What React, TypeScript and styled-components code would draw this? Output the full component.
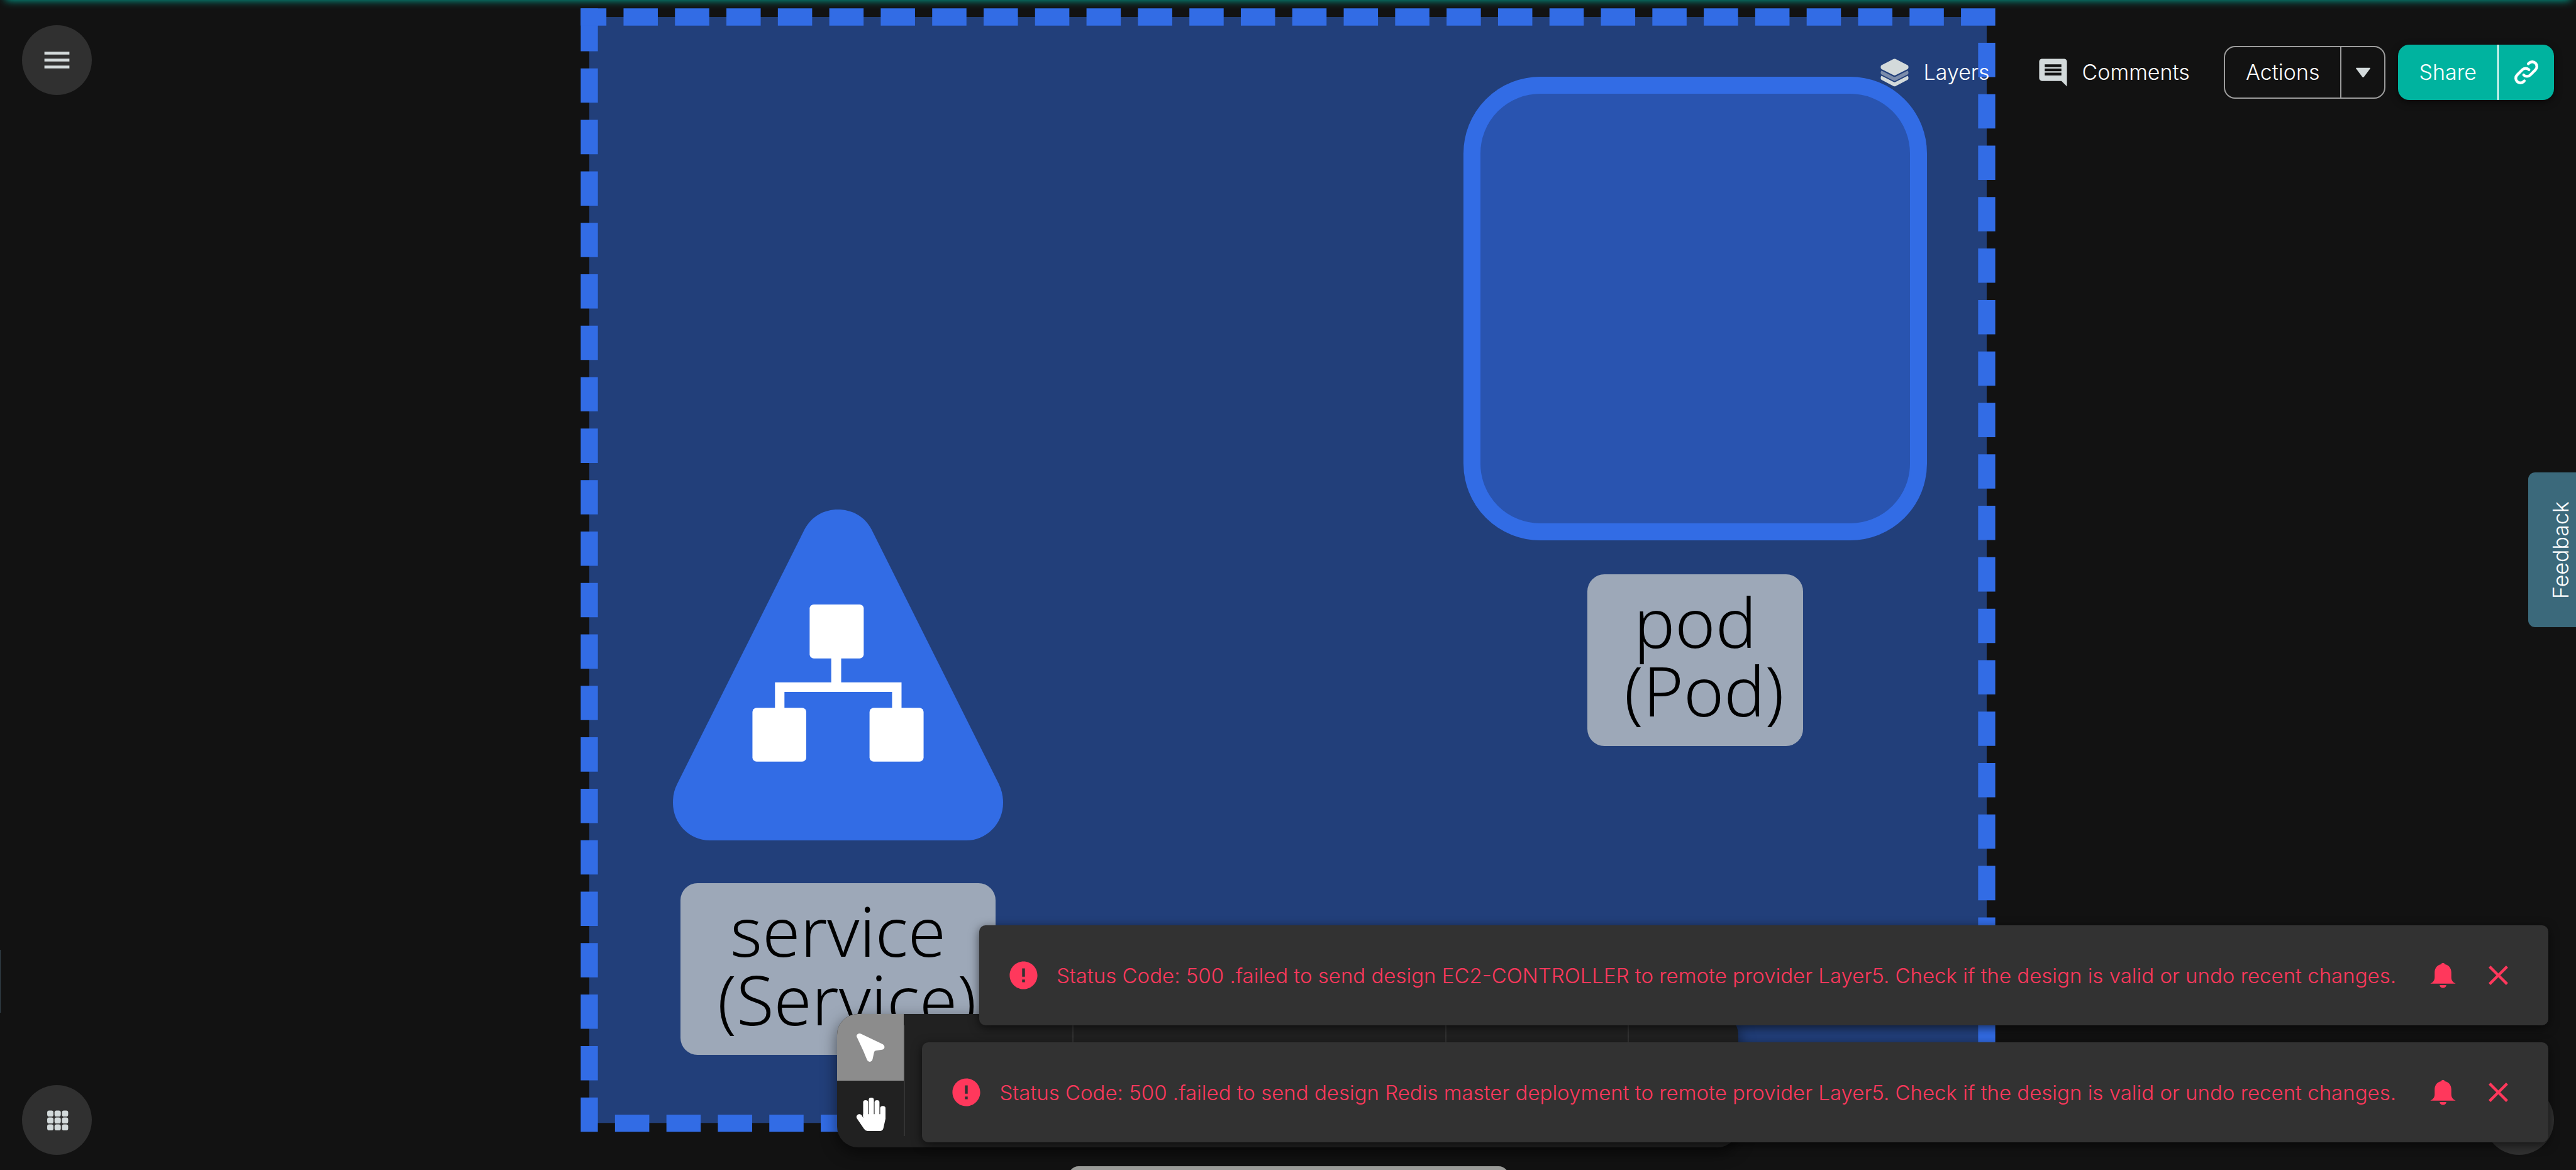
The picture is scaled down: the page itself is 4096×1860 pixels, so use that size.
import React from "react";
import styled, { createGlobalStyle } from "styled-components";

const color = {
  page: "#121212",
  panel: "#323232",
  round: "#303030",
  toolbar: "#212121",
  blue: "#326ce5",
  namespace: "#223f7a",
  pod: "#2954b0",
  label: "#9da8b8",
  teal: "#00b39f",
  icon: "#d3dadb",
  danger: "#ff385c",
};

const GlobalStyle = createGlobalStyle`
  *, *::before, *::after { box-sizing: border-box; }
  body {
    margin: 0;
    background: ${color.page};
    color: #fff;
    font-family: Inter, "Liberation Sans", sans-serif;
    font-size: 34px;
    font-weight: 300;
    line-height: 48px;
  }
  button {
    margin: 0;
    padding: 0;
    border: 0;
    background: none;
    color: inherit;
    font: inherit;
    cursor: pointer;
  }
  svg { display: block; }
`;

const Screen = styled.div`
  position: relative;
  display: flex;
  flex-direction: column;
  justify-content: space-between;
  height: 100vh;
  overflow: hidden;
`;

const TopGlow = styled.div`
  position: absolute;
  left: 9px;
  right: 9px;
  bottom: 100%;
  height: 40px;
  box-shadow: 0 0 14px ${color.teal};
`;

/* ---------- design canvas ---------- */

const Canvas = styled.main`
  position: absolute;
  inset: 0;
  overflow: hidden;
`;

const Namespace = styled.svg`
  position: absolute;
  left: 923px;
  top: 13px;
  width: 2250px;
  height: 1787px;
`;

const Node = styled.figure<{ $x: number; $y: number; $width: number }>`
  position: absolute;
  left: ${(p) => p.$x}px;
  top: ${(p) => p.$y}px;
  width: ${(p) => p.$width}px;
  margin: 0;
  display: flex;
  flex-direction: column;
  align-items: center;
  gap: 54px;
`;

const PodShape = styled.div`
  width: 100%;
  aspect-ratio: 1;
  border: 27px solid ${color.blue};
  border-radius: 122px;
  background: ${color.pod};
`;

const ServiceShape = styled.svg`
  width: 100%;
  height: 540px;
  padding-bottom: 14px;
`;

const NodeLabel = styled.figcaption`
  padding: 20px 30px 35px;
  border-radius: 27px;
  background: ${color.label};
  color: #000;
  font-family: "Noto Sans", sans-serif;
  font-size: 109px;
  font-weight: 350;
  line-height: 109px;
  text-align: center;
  white-space: pre;
`;

/* ---------- header ---------- */

const Header = styled.header`
  position: relative;
  display: flex;
  justify-content: space-between;
  align-items: flex-start;
  padding: 40px 35px 0;
`;

const RoundButton = styled.button`
  display: grid;
  place-items: center;
  width: 111px;
  height: 111px;
  border-radius: 50%;
  background: ${color.round};
  color: ${color.icon};
`;

const HeaderActions = styled.div`
  display: flex;
  align-items: center;
  gap: 20px;
  padding-top: 31px;
`;

const HeaderLinks = styled.nav`
  display: flex;
  gap: 74px;
  margin-right: 34px;
`;

const TextButton = styled.button`
  display: flex;
  align-items: center;
  gap: 20px;
`;

const Icon = styled.svg`
  flex: none;
  width: 53px;
  height: 53px;
  fill: currentColor;
`;

const LightIcon = styled(Icon)`
  color: ${color.icon};
`;

const LinkIcon = styled(Icon)`
  width: 50px;
  height: 50px;
  fill: none;
  stroke: currentColor;
  stroke-width: 2.1;
  stroke-linecap: round;
  stroke-linejoin: round;
`;

const SplitButton = styled.div<{ $solid?: boolean }>`
  display: flex;
  height: ${(p) => (p.$solid ? 88 : 84)}px;
  border: ${(p) => (p.$solid ? "0" : "2px solid #9c9c9c")};
  border-radius: 18px;
  overflow: hidden;
  background: ${(p) => (p.$solid ? color.teal : "transparent")};
  box-shadow: ${(p) => (p.$solid ? "0 4px 12px rgba(0, 0, 0, 0.5)" : "none")};

  button {
    display: grid;
    place-items: center;
    padding: 0 33px;
  }

  button + button {
    width: ${(p) => (p.$solid ? 90 : 70)}px;
    padding: 0;
    border-left: 2px solid ${(p) => (p.$solid ? "#fff" : "#9c9c9c")};
  }
`;

const FeedbackTab = styled.button`
  position: absolute;
  right: 0;
  top: 751px;
  display: grid;
  place-items: center;
  width: 76px;
  height: 246px;
  padding-left: 28px;
  border-radius: 11px 0 0 11px;
  background: #3b697b;
`;

const FeedbackText = styled.span`
  writing-mode: vertical-rl;
  transform: rotate(180deg);
`;

/* ---------- bottom area ---------- */

const Footer = styled.footer`
  position: relative;
  display: flex;
  justify-content: space-between;
  padding: 0 35px 24px;
`;

const Toolbar = styled.div`
  position: absolute;
  left: 1331px;
  bottom: 36px;
  display: flex;
  align-items: center;
  width: 1433px;
  height: 212px;
  border-radius: 33px;
  overflow: hidden;
  background: ${color.toolbar};
  box-shadow: 0 8px 24px rgba(0, 0, 0, 0.55);
`;

const ToolStack = styled.div`
  display: flex;
  flex-direction: column;
`;

const Tool = styled.button<{ $active?: boolean }>`
  display: grid;
  place-items: center;
  width: 106px;
  height: 106px;
  background: ${(p) => (p.$active ? "#8c8c8c" : "transparent")};
`;

const ToolSection = styled.div<{ $width: number }>`
  width: ${(p) => p.$width}px;
  height: 176px;
  border-left: 2px solid #333;
`;

const CursorIcon = styled.svg`
  width: 45px;
  height: 45px;
  fill: #fff;
`;

const HandIcon = styled.svg`
  width: 47px;
  height: 53px;
  fill: #fff;
`;

const Drawer = styled.div`
  position: absolute;
  left: 1699px;
  top: calc(100% - 6px);
  width: 700px;
  height: 40px;
  border-radius: 16px;
  background: #9a9b98;
`;

const SideHandle = styled.div`
  position: absolute;
  left: 0;
  bottom: 250px;
  width: 1px;
  height: 100px;
  background: #33414a;
`;

const Toasts = styled.section`
  position: absolute;
  right: 44px;
  bottom: 44px;
  display: flex;
  flex-direction: column;
  align-items: flex-end;
  gap: 27px;
`;

const Toast = styled.div`
  display: flex;
  align-items: center;
  height: 159px;
  padding: 0 53px 0 44px;
  border-radius: 10px;
  background: ${color.panel};
  color: ${color.danger};
  font-size: 33px;
  white-space: nowrap;
  box-shadow: 0 4px 16px rgba(0, 0, 0, 0.6);
`;

const ToastText = styled.p`
  margin: 0 48px 0 26px;
`;

const ToastActions = styled.div`
  display: flex;
  gap: 35px;
`;

const errorPath =
  "M12 2C6.48 2 2 6.48 2 12s4.48 10 10 10 10-4.48 10-10S17.52 2 12 2zm1 15h-2v-2h2v2zm0-4h-2V7h2v6z";
const closePath =
  "M19 6.41 17.59 5 12 10.59 6.41 5 5 6.41 10.59 12 5 17.59 6.41 19 12 13.41 17.59 19 19 17.59 13.41 12z";
const bellPath =
  "M12 3c-.8 0-1.3.5-1.3 1.1C7.8 4.6 6 6.9 6 10v3.5c0 2-1 3.5-3 4.4v.1h18v-.1c-2-.9-3-2.4-3-4.4V10c0-3.1-1.8-5.4-4.7-5.9 0-.6-.5-1.1-1.3-1.1zM9.6 19h4.8a2.4 2.1 0 0 1-4.8 0z";
const commentPath =
  "M21.99 4c0-1.1-.89-2-1.99-2H4c-1.1 0-2 .9-2 2v12c0 1.1.9 2 2 2h14l4 4-.01-18zM18 14H6v-2h12v2zm0-3H6V9h12v2zm0-3H6V6h12v2z";

const failures = ["EC2-CONTROLLER", "Redis master deployment"];

function ErrorToast({ design }: { design: string }) {
  return (
    <Toast role="alert">
      <Icon viewBox="0 0 24 24" aria-hidden="true">
        <path d={errorPath} />
      </Icon>
      <ToastText>
        Status Code: 500 .failed to send design {design} to remote provider Layer5. Check if the
        design is valid or undo recent changes.
      </ToastText>
      <ToastActions>
        <button type="button" aria-label="Notifications">
          <Icon viewBox="0 0 24 24">
            <path d={bellPath} />
          </Icon>
        </button>
        <button type="button" aria-label="Dismiss">
          <Icon viewBox="0 0 24 24">
            <path d={closePath} />
          </Icon>
        </button>
      </ToastActions>
    </Toast>
  );
}

function DesignCanvas() {
  return (
    <Canvas>
      <Namespace viewBox="1252 18 3052 2424" aria-hidden="true">
        <rect x="1271" y="37" width="3014" height="2385" fill={color.namespace} />
        <path
          d="M1271 37V2422.5H4285V37Z"
          fill="none"
          stroke={color.blue}
          strokeWidth="37"
          strokeDasharray="73.97 36.98"
        />
        <path d="M1252.5 18.5h37v37h-37z" fill={color.blue} />
      </Namespace>
      <Node $x={2327} $y={122} $width={737}>
        <PodShape />
        <NodeLabel>{"pod\n (Pod)"}</NodeLabel>
      </Node>
      <Node $x={1070} $y={810} $width={525}>
        <ServiceShape viewBox="98 96 1362 1398" preserveAspectRatio="none" aria-hidden="true">
          <path
            fill={color.blue}
            d="M640 182C670 122 725 96 778 96C833 96 888 122 918 182L1442 1255C1455 1283 1460 1310 1460 1335C1460 1425 1390 1494 1308 1494H250C165 1494 98 1422 98 1335C98 1305 103 1282 115 1257Z"
          />
          <g fill="#fff">
            <rect x="662" y="497" width="223" height="228" rx="17" />
            <rect x="426" y="934" width="222" height="227" rx="17" />
            <rect x="909" y="934" width="223" height="227" rx="17" />
            <path d="M751 720h41v106h249v112h-39v-71H558v71h-39V826h232z" />
          </g>
        </ServiceShape>
        <NodeLabel>{"service\n (Service)"}</NodeLabel>
      </Node>
    </Canvas>
  );
}

function GridIcon() {
  const steps = [0, 1, 2];
  return (
    <Icon viewBox="0 0 24 24">
      {steps.map((row) =>
        steps.map((col) => (
          <rect
            key={`${row}-${col}`}
            x={5 + col * 5.3}
            y={5.2 + row * 5}
            width="4.5"
            height="4.3"
            rx="1.4"
          />
        ))
      )}
    </Icon>
  );
}

export default function App() {
  return (
    <>
      <GlobalStyle />
      <Screen>
        <DesignCanvas />
        <TopGlow />

        <Header>
          <RoundButton type="button" aria-label="Menu">
            <Icon viewBox="0 0 24 24">
              <path d="M3 18h18v-2H3v2zm0-5h18v-2H3v2zm0-7v2h18V6H3z" />
            </Icon>
          </RoundButton>
          <HeaderActions>
            <HeaderLinks>
              <TextButton type="button">
                <LightIcon viewBox="0 0 24 24" aria-hidden="true">
                  <path d="M11.3 2.2Q12 1.8 12.7 2.2L21.3 6.6Q22 7 22 7.8V8.3Q22 9.1 21.3 9.5L12.7 13.8Q12 14.2 11.3 13.8L2.7 9.5Q2 9.1 2 8.3V7.8Q2 7 2.7 6.6Z" />
                  <path
                    opacity="0.5"
                    d="M2.6 10.5L11.3 14.9Q12 15.3 12.7 14.9L21.4 10.5Q22 11 22 12Q22 13 21.3 13.4L12.7 17.8Q12 18.2 11.3 17.8L2.7 13.4Q2 13 2 12Q2 11 2.6 10.5Z"
                  />
                  <path d="M2.6 14.3L11.3 18.7Q12 19.1 12.7 18.7L21.4 14.3Q22 14.8 22 15.8Q22 16.8 21.3 17.2L12.7 21.7Q12 22.1 11.3 21.7L2.7 17.2Q2 16.8 2 15.8Q2 14.8 2.6 14.3Z" />
                </LightIcon>
                Layers
              </TextButton>
              <TextButton type="button">
                <LightIcon viewBox="0 0 24 24" aria-hidden="true">
                  <path d={commentPath} />
                </LightIcon>
                Comments
              </TextButton>
            </HeaderLinks>
            <SplitButton>
              <button type="button">Actions</button>
              <button type="button" aria-label="More actions">
                <LightIcon viewBox="0 0 24 24">
                  <path d="M7.2 8.5h9.6q.6 0 .3.6l-4.5 6q-.6.7-1.2 0l-4.5-6q-.3-.6.3-.6z" />
                </LightIcon>
              </button>
            </SplitButton>
            <SplitButton $solid>
              <button type="button">Share</button>
              <button type="button" aria-label="Copy link">
                <LinkIcon viewBox="0 0 24 24">
                  <path d="M10 14a3.5 3.5 0 0 0 5 0l4-4a3.5 3.5 0 0 0-5-5l-.5.5" />
                  <path d="M14 10a3.5 3.5 0 0 0-5 0l-4 4a3.5 3.5 0 0 0 5 5l.5-.5" />
                </LinkIcon>
              </button>
            </SplitButton>
          </HeaderActions>
        </Header>

        <Footer>
          <RoundButton type="button" aria-label="Applications">
            <GridIcon />
          </RoundButton>
          <RoundButton type="button" aria-label="Help" />
        </Footer>

        <FeedbackTab type="button">
          <FeedbackText>Feedback</FeedbackText>
        </FeedbackTab>
        <SideHandle />

        <Toolbar role="toolbar">
          <ToolStack>
            <Tool type="button" $active aria-label="Select">
              <CursorIcon viewBox="877 883 120 140" preserveAspectRatio="none">
                <path d="M877 896C877 886 888 880 897 885L985 934C1000 942 998 960 985 963L958 968Q952 970 951 977L945 1010C942 1027 926 1026 921 1012L906 970L880 905Q877 900 877 896Z" />
              </CursorIcon>
            </Tool>
            <Tool type="button" aria-label="Pan">
              <HandIcon viewBox="873 1204 127 168" preserveAspectRatio="none">
                <rect x="904" y="1217" width="21" height="90" rx="10.5" />
                <rect x="928" y="1204" width="22" height="100" rx="11" />
                <rect x="953" y="1217" width="21" height="90" rx="10.5" />
                <rect x="977" y="1246" width="23" height="70" rx="11.5" />
                <path d="M904 1287H1000V1310L991 1358Q988 1372 976 1372H922Q914 1372 908 1362L878 1310C868 1296 887 1278 898 1293L904 1306Z" />
              </HandIcon>
            </Tool>
          </ToolStack>
          <ToolSection $width={268} />
          <ToolSection $width={593} />
          <ToolSection $width={290} />
          <ToolSection $width={174} />
        </Toolbar>
        <Drawer />

        <Toasts aria-label="Notifications">
          {failures.map((design) => (
            <ErrorToast key={design} design={design} />
          ))}
        </Toasts>
      </Screen>
    </>
  );
}
